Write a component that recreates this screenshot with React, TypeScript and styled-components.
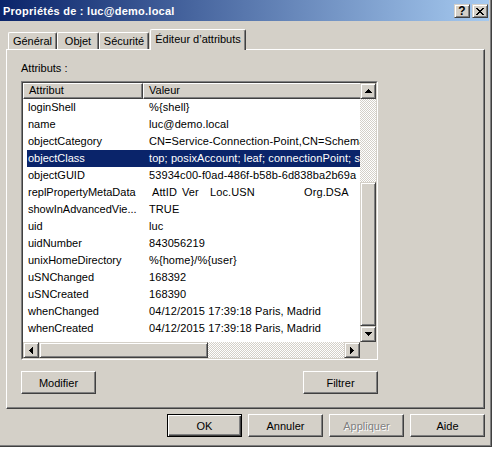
import React from "react";
import styled, { createGlobalStyle, css } from "styled-components";

const FACE = "#D4D0C8";
const SEL = "#0A246A";

const GlobalStyle = createGlobalStyle`
  html, body { margin: 0; padding: 0; background: #fff; }
  body { font-family: "Liberation Sans", Arial, sans-serif; font-size: 11px; color: #000; }
  * { box-sizing: border-box; }
`;

const raisedThin = css`
  background: ${FACE};
  border: 1px solid;
  border-color: ${FACE} #404040 #404040 ${FACE};
  box-shadow: inset 1px 1px #fff, inset -1px -1px #808080;
`;

const checker = css`
  background: repeating-conic-gradient(${FACE} 0% 25%, #fff 0% 50%) 0 0 / 2px 2px;
`;

const Page = styled.div`
  width: 497px;
  height: 450px;
  background: #fff;
  overflow: hidden;
`;

const Window = styled.div`
  width: 492px;
  height: 447px;
  background: ${FACE};
  border-right: 1px solid #404040;
  border-bottom: 1px solid #404040;
  box-shadow: inset -1px -1px #808080;
  padding-right: 2px;
  display: flex;
  flex-direction: column;
`;

const TitleBar = styled.div`
  height: 21px;
  flex: none;
  background: linear-gradient(to right, ${SEL}, #A6CAF0);
  display: flex;
  align-items: center;
  padding: 1px 1px 0 3px;
`;

const Title = styled.div`
  flex: 1;
  color: #fff;
  font-weight: bold;
  font-size: 11px;
  letter-spacing: 0.25px;
  white-space: nowrap;
`;

const CaptionButton = styled.div<{ $gap?: number }>`
  ${raisedThin}
  width: 16px;
  height: 14px;
  margin-left: ${(p) => p.$gap ?? 0}px;
  display: flex;
  align-items: center;
  justify-content: center;
  font-weight: bold;
  font-size: 12px;
  line-height: 12px;
  color: #000;
`;

const TabsRow = styled.div`
  height: 28px;
  flex: none;
  display: flex;
  align-items: flex-end;
  padding-left: 8px;
`;

const Tab = styled.div<{ $w: number; $active?: boolean; $ml?: number }>`
  width: ${(p) => p.$w}px;
  height: ${(p) => (p.$active ? 21 : 17)}px;
  margin-bottom: ${(p) => (p.$active ? -1 : 0)}px;
  margin-left: ${(p) => p.$ml ?? 0}px;
  background: ${FACE};
  border-top: 1px solid #fff;
  border-left: 1px solid #fff;
  border-right: 1px solid #404040;
  border-radius: 2px 2px 0 0;
  box-shadow: inset -1px 0 #808080;
  display: flex;
  align-items: center;
  justify-content: center;
  padding-bottom: ${(p) => (p.$active ? 2 : 0)}px;
  white-space: nowrap;
  position: relative;
  z-index: ${(p) => (p.$active ? 1 : 0)};
`;

const Panel = styled.div`
  margin-left: 6px;
  width: 479px;
  height: 360px;
  flex: none;
  border: 1px solid;
  border-color: #fff #404040 #404040 #fff;
  box-shadow: inset -1px -1px #808080;
  padding: 12px 14px 0 14px;
  display: flex;
  flex-direction: column;
`;

const Label = styled.div`
  height: 13px;
  line-height: 13px;
  margin-bottom: 6px;
`;

const ListOuter = styled.div`
  width: 357px;
  height: 279px;
  border: 1px solid;
  border-color: #808080 #fff #fff #808080;
`;

const ListInner = styled.div`
  width: 100%;
  height: 100%;
  border: 1px solid;
  border-color: #404040 ${FACE} ${FACE} #404040;
  display: grid;
  grid-template-columns: 337px 16px;
  grid-template-rows: 259px 16px;
  background: #fff;
`;

const Content = styled.div`
  overflow: hidden;
  background: #fff;
`;

const Header = styled.div`
  display: flex;
  height: 16px;
  width: 600px;
`;

const HeaderCell = styled.div<{ $w: number }>`
  width: ${(p) => p.$w}px;
  height: 16px;
  flex: none;
  background: ${FACE};
  border-top: 1px solid #fff;
  border-left: 1px solid #fff;
  border-bottom: 1px solid #404040;
  border-right: 1px solid #404040;
  box-shadow: inset -1px -1px #808080;
  padding-left: 5px;
  line-height: 13px;
  white-space: nowrap;
`;

const Row = styled.div<{ $selected?: boolean }>`
  display: flex;
  height: 17px;
  line-height: 17px;
  width: 600px;
  margin-left: 4px;
  white-space: nowrap;
  background: ${(p) => (p.$selected ? SEL : "transparent")};
  color: ${(p) => (p.$selected ? "#fff" : "#000")};
`;

const NameCell = styled.div`
  width: 116px;
  flex: none;
  padding-left: 1px;
  overflow: hidden;
`;

const ValueCell = styled.div`
  flex: none;
  padding-left: 6px;
  letter-spacing: 0.1px;
`;

const Sub = styled.span<{ $w?: number; $ml?: number }>`
  display: inline-block;
  width: ${(p) => (p.$w ? `${p.$w}px` : "auto")};
  margin-left: ${(p) => p.$ml ?? 0}px;
`;

const VScroll = styled.div`
  display: flex;
  flex-direction: column;
`;

const HScroll = styled.div`
  display: flex;
`;

const Track = styled.div`
  flex: 1;
  ${checker}
`;

const Thumb = styled.div<{ $w?: number; $h?: number }>`
  ${raisedThin}
  flex: none;
  width: ${(p) => (p.$w ? `${p.$w}px` : "auto")};
  height: ${(p) => (p.$h ? `${p.$h}px` : "auto")};
`;

const ArrowButton = styled.div`
  ${raisedThin}
  width: 16px;
  height: 16px;
  flex: none;
  display: flex;
  align-items: center;
  justify-content: center;
`;

const Corner = styled.div`
  background: ${FACE};
`;

const PanelButtons = styled.div`
  width: 357px;
  margin-top: 11px;
  display: flex;
  justify-content: space-between;
`;

const Button = styled.button<{ $default?: boolean }>`
  width: 75px;
  height: 23px;
  padding: 0;
  margin: 0;
  font: 11px "Liberation Sans", Arial, sans-serif;
  color: #000;
  background: ${FACE};
  border: 1px solid;
  border-color: #fff #404040 #404040 #fff;
  box-shadow: inset -1px -1px #808080;
  outline: none;
  ${(p) =>
    p.$default &&
    css`
      border-color: #000;
      box-shadow: inset 1px 1px #fff, inset -1px -1px #404040, inset -2px -2px #808080;
    `}
  &:disabled {
    color: #808080;
    text-shadow: 1px 1px #fff;
  }
`;

const DialogButtons = styled.div`
  margin-top: 5px;
  padding-right: 4px;
  display: flex;
  justify-content: flex-end;
  gap: 6px;
`;

const Glyph = styled.svg`
  display: block;
  shape-rendering: crispEdges;
`;

const arrows: Record<string, { w: number; h: number; d: string }> = {
  up: { w: 7, h: 4, d: "M3 0h1v1H3z M2 1h3v1H2z M1 2h5v1H1z M0 3h7v1H0z" },
  down: { w: 7, h: 4, d: "M0 0h7v1H0z M1 1h5v1H1z M2 2h3v1H2z M3 3h1v1H3z" },
  left: { w: 4, h: 7, d: "M3 0h1v7H3z M2 1h1v5H2z M1 2h1v3H1z M0 3h1v1H0z" },
  right: { w: 4, h: 7, d: "M0 0h1v7H0z M1 1h1v5H1z M2 2h1v3H2z M3 3h1v1H3z" },
};

const Arrow: React.FC<{ dir: "up" | "down" | "left" | "right" }> = ({ dir }) => {
  const a = arrows[dir];
  return (
    <ArrowButton>
      <Glyph width={a.w} height={a.h} viewBox={`0 0 ${a.w} ${a.h}`}>
        <path d={a.d} fill="#000" />
      </Glyph>
    </ArrowButton>
  );
};

const CloseGlyph = () => (
  <Glyph width={8} height={7} viewBox="0 0 8 7">
    <path
      d="M0 0h2v1H0z M6 0h2v1H6z M1 1h2v1H1z M5 1h2v1H5z M2 2h4v1H2z M3 3h2v1H3z M2 4h4v1H2z M1 5h2v1H1z M5 5h2v1H5z M0 6h2v1H0z M6 6h2v1H6z"
      fill="#000"
    />
  </Glyph>
);

type Item = { name: string; value: React.ReactNode; selected?: boolean };

const items: Item[] = [
  { name: "loginShell", value: "%{shell}" },
  { name: "name", value: "luc@demo.local" },
  { name: "objectCategory", value: "CN=Service-Connection-Point,CN=Schema,CN=Configuration,DC=demo,DC=local" },
  { name: "objectClass", value: "top; posixAccount; leaf; connectionPoint; serviceConnectionPoint", selected: true },
  { name: "objectGUID", value: "53934c00-f0ad-486f-b58b-6d838ba2b69a" },
  {
    name: "replPropertyMetaData",
    value: (
      <>
        <Sub $ml={3} $w={30}>AttID</Sub>
        <Sub $w={28}>Ver</Sub>
        <Sub $w={94}>Loc.USN</Sub>
        <Sub>Org.DSA</Sub>
      </>
    ),
  },
  { name: "showInAdvancedVie...", value: "TRUE" },
  { name: "uid", value: "luc" },
  { name: "uidNumber", value: "843056219" },
  { name: "unixHomeDirectory", value: "%{home}/%{user}" },
  { name: "uSNChanged", value: "168392" },
  { name: "uSNCreated", value: "168390" },
  { name: "whenChanged", value: "04/12/2015 17:39:18 Paris, Madrid" },
  { name: "whenCreated", value: "04/12/2015 17:39:18 Paris, Madrid" },
];

export default function App() {
  return (
    <Page>
      <GlobalStyle />
      <Window>
        <TitleBar>
          <Title>Propriétés de : luc@demo.local</Title>
          <CaptionButton>?</CaptionButton>
          <CaptionButton $gap={2}>
            <CloseGlyph />
          </CaptionButton>
        </TitleBar>
        <TabsRow>
          <Tab $w={49}>Général</Tab>
          <Tab $w={42}>Objet</Tab>
          <Tab $w={50}>Sécurité</Tab>
          <Tab $w={96} $ml={1} $active>
            Éditeur d’attributs
          </Tab>
        </TabsRow>
        <Panel>
          <Label>Attributs :</Label>
          <ListOuter>
            <ListInner>
              <Content>
                <Header>
                  <HeaderCell $w={120}>Attribut</HeaderCell>
                  <HeaderCell $w={480}>Valeur</HeaderCell>
                </Header>
                {items.map((it) => (
                  <Row key={it.name} $selected={it.selected}>
                    <NameCell>{it.name}</NameCell>
                    <ValueCell>{it.value}</ValueCell>
                  </Row>
                ))}
              </Content>
              <VScroll>
                <Arrow dir="up" />
                <Track />
                <Thumb $h={144} />
                <Arrow dir="down" />
              </VScroll>
              <HScroll>
                <Arrow dir="left" />
                <Thumb $w={169} />
                <Track />
                <Arrow dir="right" />
              </HScroll>
              <Corner />
            </ListInner>
          </ListOuter>
          <PanelButtons>
            <Button>Modifier</Button>
            <Button>Filtrer</Button>
          </PanelButtons>
        </Panel>
        <DialogButtons>
          <Button $default>OK</Button>
          <Button>Annuler</Button>
          <Button disabled>Appliquer</Button>
          <Button>Aide</Button>
        </DialogButtons>
      </Window>
    </Page>
  );
}
